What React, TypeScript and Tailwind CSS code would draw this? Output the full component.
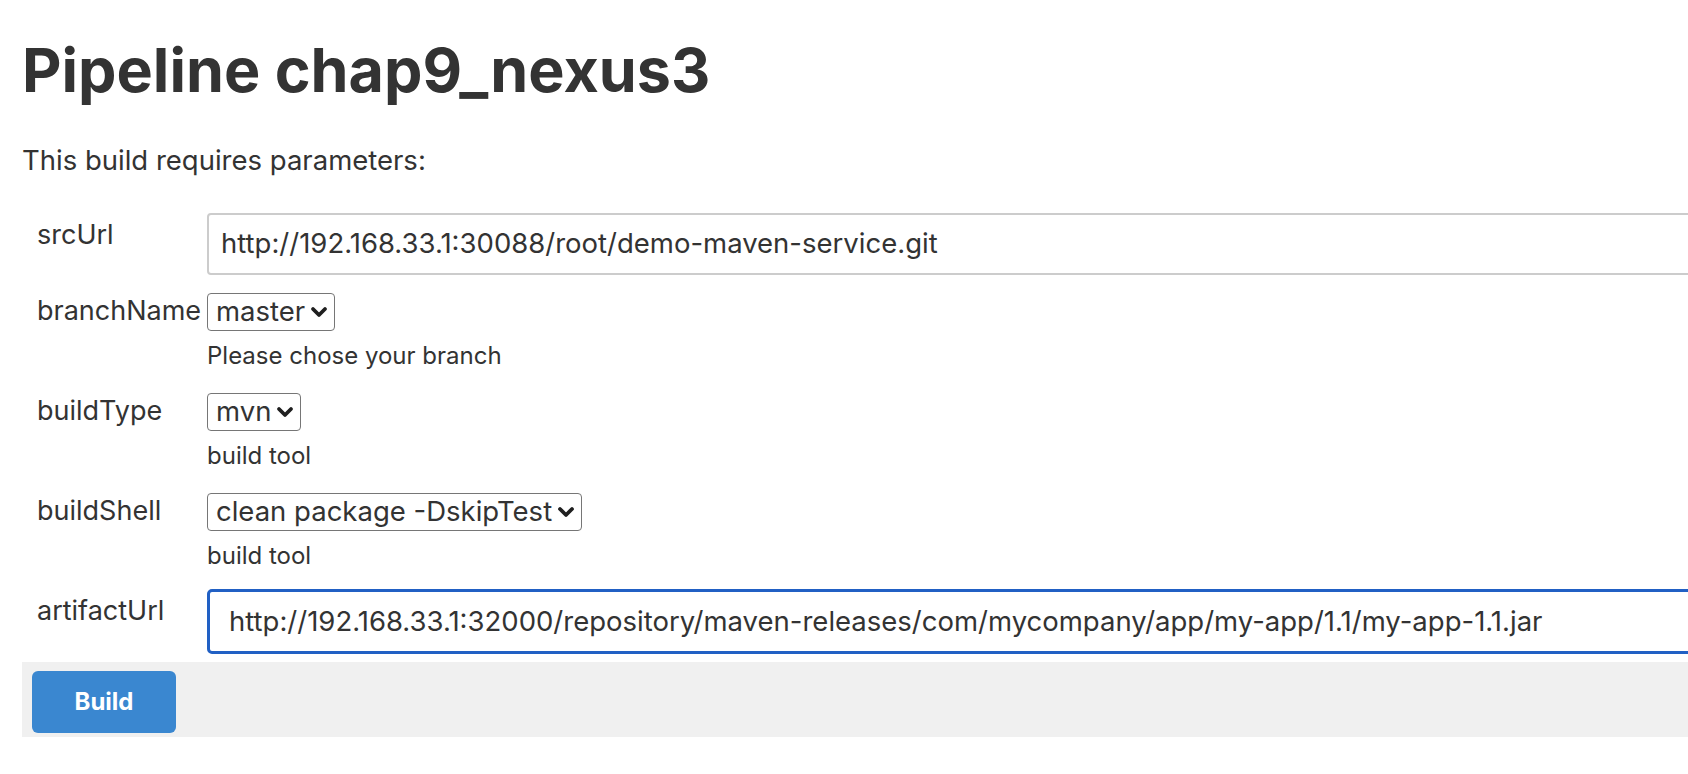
import React from "react";

function Chevron() {
  return (
    <svg width="18" height="12" viewBox="0 0 18 12" className="shrink-0">
      <path d="M3 3 L9 9 L15 3" fill="none" stroke="#1f1f1f" strokeWidth="3.8" strokeLinecap="round" strokeLinejoin="round" />
    </svg>
  );
}

function SelectBox({ value }: { value: string }) {
  return (
    <div className="inline-flex h-[38px] items-center gap-[5px] rounded-[4px] border border-[#767676] bg-white pl-[8px] pr-[6px] text-[27.5px] leading-none text-[#333]">
      <span>{value}</span>
      <Chevron />
    </div>
  );
}

function Label({ children, pad }: { children: React.ReactNode; pad: boolean }) {
  return (
    <div className={pad ? "pl-[15px] pt-[4px] text-[27px] leading-[36px] text-[#333]" : "pl-[15px] pt-0 text-[27px] leading-[36px] text-[#333]"}>
      {children}
    </div>
  );
}

function Help({ children }: { children: React.ReactNode }) {
  return <div className="mt-[10px] text-[24px] leading-[30px] text-[#333]">{children}</div>;
}

export default function App() {
  return (
    <div className="h-[774px] w-[1688px] overflow-hidden bg-white font-['Inter','Noto_Sans',sans-serif] text-[#333]">
      <div className="w-[1760px] pl-[22px]">
        <h1 className="mt-[34px] text-[61px] font-bold leading-[72px] text-[#333]">Pipeline chap9_nexus3</h1>
        <p className="mt-[36px] text-[27.5px] leading-[36px]">This build requires parameters:</p>

        <div className="mt-[35px] grid grid-cols-[185px_1fr]">
          <Label pad>srcUrl</Label>
          <div className="flex h-[62px] items-center rounded-[4px] border-2 border-[#cccccc] bg-white pl-[12px] text-[27.5px] text-[#333]">
            http://192.168.33.1:30088/root/demo-maven-service.git
          </div>

          <div className="col-span-2 h-[18px]" />

          <Label pad={false}>branchName</Label>
          <div className="flex flex-col items-start">
            <SelectBox value="master" />
            <Help>Please chose your branch</Help>
          </div>

          <div className="col-span-2 h-[22px]" />

          <Label pad={false}>buildType</Label>
          <div className="flex flex-col items-start">
            <SelectBox value="mvn" />
            <Help>build tool</Help>
          </div>

          <div className="col-span-2 h-[22px]" />

          <Label pad={false}>buildShell</Label>
          <div className="flex flex-col items-start">
            <SelectBox value="clean package -DskipTest" />
            <Help>build tool</Help>
          </div>

          <div className="col-span-2 h-[18px]" />

          <Label pad>artifactUrl</Label>
          <div className="flex h-[65px] items-center rounded-[5px] border-[3px] border-[#2160c4] bg-white pl-[19px] text-[27.5px] text-[#333]">
            http://192.168.33.1:32000/repository/maven-releases/com/mycompany/app/my-app/1.1/my-app-1.1.jar
          </div>
        </div>

        <div className="mt-[8px] flex h-[75px] items-start bg-[#f0f0f0] pl-[10px] pt-[9px]">
          <button className="flex h-[62px] w-[144px] items-center justify-center rounded-[6px] bg-[#3a87d0] text-[24px] font-bold text-white">
            Build
          </button>
        </div>
      </div>
    </div>
  );
}
